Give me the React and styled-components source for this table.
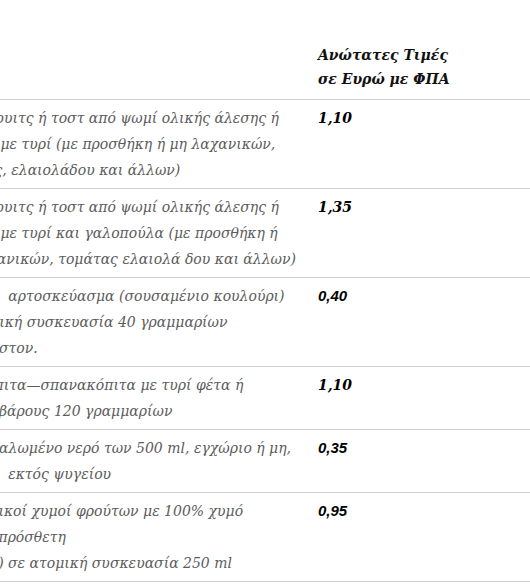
import React from "react";
import styled, { createGlobalStyle } from "styled-components";

const rows = [
  {
    lines: [
      "Σάντουιτς ή τοστ από ψωμί ολικής άλεσης ή",
      "απλό με τυρί (με προσθήκη ή μη λαχανικών,",
      "φέτας, ελαιολάδου και άλλων)",
    ],
    price: "1,10",
  },
  {
    lines: [
      "Σάντουιτς ή τοστ από ψωμί ολικής άλεσης ή",
      "απλό με τυρί και γαλοπούλα (με προσθήκη ή",
      " (λαχανικών, τομάτας ελαιολά δου και άλλων)",
    ],
    price: "1,35",
  },
  {
    lines: [
      "Ένα    αρτοσκεύασμα (σουσαμένιο κουλούρι)",
      " ατομική συσκευασία 40 γραμμαρίων",
      "ή έκαστον.",
    ],
    price: "0,40",
    sans: true,
  },
  {
    lines: ["Τυρόπιτα—σπανακόπιτα με τυρί φέτα ή", "τυρί  βάρους 120 γραμμαρίων"],
    price: "1,10",
  },
  {
    lines: [" Εμφιαλωμένο νερό των 500 ml, εγχώριο ή μη,", "ή μη    εκτός ψυγείου"],
    price: "0,35",
    sans: true,
  },
  {
    lines: [
      "  Φυσικοί χυμοί φρούτων με 100% χυμό",
      "άνευ πρόσθετη",
      "(νερό) σε ατομική συσκευασία 250 ml",
    ],
    price: "0,95",
    sans: true,
  },
];

const GlobalStyle = createGlobalStyle`
  html, body {
    margin: 0;
    padding: 0;
    background: #fff;
  }
  body {
    font-family: "DejaVu Serif", "Liberation Serif", serif;
  }
`;

const Page = styled.div`
  width: 100%;
  height: 586px;
  overflow: hidden;
`;

const Table = styled.div`
  display: grid;
  grid-template-columns: 358px 1fr;
  margin-left: -40px;
  width: calc(100% + 40px);
`;

const Row = styled.div`
  display: contents;
`;

const Cell = styled.div`
  border-bottom: 1px solid #cfcfcf;
  padding: ${(p) => (p.$head ? "43px 0 8px" : "5px 0")};
`;

const HeadTitle = styled.div`
  font-size: 14px;
  line-height: 24px;
  font-weight: bold;
  font-style: italic;
  color: #111;
`;

const Line = styled.div`
  white-space: pre;
  font-size: 14px;
  line-height: 26px;
  font-style: italic;
  color: #5c5c5c;
`;

const Price = styled.div`
  font-family: ${(p) => (p.$sans ? '"Liberation Sans", Arial, sans-serif' : '"DejaVu Serif", serif')};
  font-size: ${(p) => (p.$sans ? "15px" : "14px")};
  line-height: 26px;
  font-weight: bold;
  font-style: italic;
  color: #000;
`;

export default function App() {
  return (
    <Page>
      <GlobalStyle />
      <Table>
        <Row>
          <Cell $head />
          <Cell $head>
            <HeadTitle>Ανώτατες Τιμές</HeadTitle>
            <HeadTitle>σε Ευρώ με ΦΠΑ</HeadTitle>
          </Cell>
        </Row>
        {rows.map((r, i) => (
          <Row key={i}>
            <Cell>
              {r.lines.map((l, j) => (
                <Line key={j}>{l}</Line>
              ))}
            </Cell>
            <Cell>
              <Price $sans={r.sans}>{r.price}</Price>
            </Cell>
          </Row>
        ))}
      </Table>
    </Page>
  );
}
